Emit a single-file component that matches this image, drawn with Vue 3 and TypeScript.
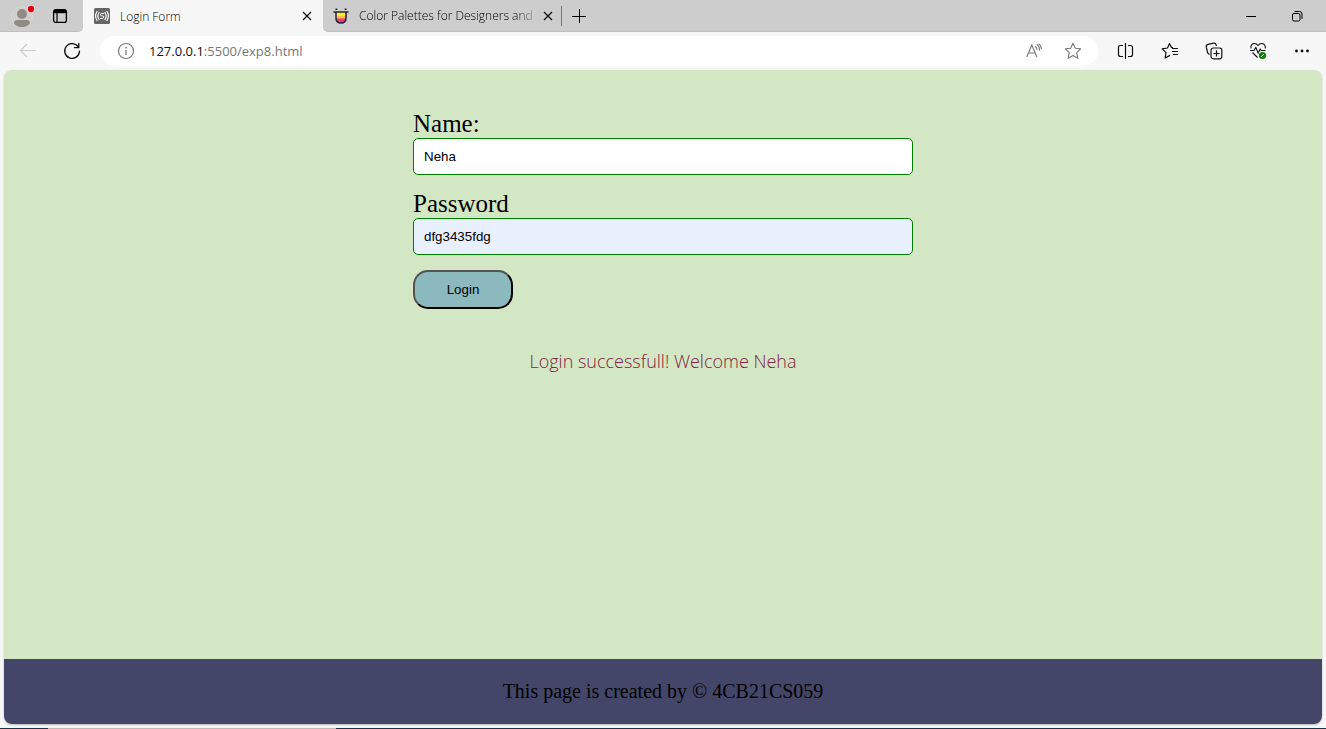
<script setup lang="ts">
import { ref } from 'vue'

const userName = ref<string>('Neha')
const password = ref<string>('dfg3435fdg')
const address = ref<string>('127.0.0.1:5500/exp8.html')
const message = ref<string>('Login successfull! Welcome Neha')

function login(): void {
  message.value = `Login successfull! Welcome ${userName.value}`
}
</script>

<template>
  <div class="browser">
    <header class="tabs">
      <div class="lead">
        <button class="icon-btn profile" aria-label="Profile">
          <svg width="28" height="28" viewBox="0 0 28 28">
            <circle cx="14" cy="15" r="10.5" fill="#d2cfcb" stroke="#dad7d2" stroke-width="1" />
            <circle cx="14" cy="12" r="5" fill="#8f8b87" />
            <path d="M6 21.5c0-2.500 1.500-3.500 3.500-3.500h9c2 0 3.500 1 3.500 3.500c-1.800 2.400-4.800 3.800-8 3.800s-6.200-1.400-8-3.800z" fill="#8f8b87" />
            <circle cx="23" cy="7" r="4" fill="#e8e6e4" />
            <circle cx="23" cy="7" r="3.200" fill="#e60012" />
          </svg>
        </button>
        <button class="icon-btn" aria-label="Tab actions">
          <svg width="16" height="16" viewBox="0 0 16 16" fill="none" stroke="#000">
            <rect x="1.600" y="1.600" width="12.800" height="12.800" rx="2.200" stroke-width="1.300" />
            <path d="M2 3.500h12" stroke-width="3.400" />
            <path d="M5 5v9" stroke-width="1.200" />
          </svg>
        </button>
      </div>
      <div class="tab active">
        <svg width="16" height="16" viewBox="0 0 16 16" fill="none" stroke="#fff" stroke-linecap="round">
          <rect width="16" height="16" rx="1.500" fill="#666" stroke="none" />
          <path d="M3 3.500Q0.200 8 3 12.500M13 3.500Q15.800 8 13 12.500M5 4.500Q2.800 8 5 11.500M11 4.500Q13.200 8 11 11.500" stroke-width="1.200" />
          <path d="M9.500 5.500H7.300Q6.500 5.500 6.500 6.600T7.500 7.800H8.500Q9.500 7.800 9.500 9T8.500 10.500H6.500" stroke-width="1" />
        </svg>
        <span class="title">Login Form</span>
        <button class="icon-btn close" aria-label="Close Login Form">
          <svg width="10" height="10" viewBox="0 0 10 10" stroke="#111" stroke-width="1.300"><path d="M1 1l8 8M9 1L1 9" /></svg>
        </button>
      </div>
      <div class="tab idle">
        <svg width="16" height="16" viewBox="0 0 16 16">
          <path d="M3 4h10v6q0 5-5 5t-5-5z" fill="#ffed24" />
          <path d="M3 8h10v3H3z" fill="#ffbd55" />
          <path d="M3.200 10.500h9.600Q12 15 8 15T3.200 10.500z" fill="#ed3c72" />
          <path d="M0.500 4h15M3 4v6q0 5 5 5t5-5V4" fill="none" stroke="#20233f" stroke-width="1.500" />
          <path d="M2.500 1.200h1.800M11.700 1.200h1.800" stroke="#20233f" stroke-width="1.400" />
        </svg>
        <span class="title">Color Palettes for Designers and</span>
        <button class="icon-btn close" aria-label="Close Color Palettes">
          <svg width="10" height="10" viewBox="0 0 10 10" stroke="#111" stroke-width="1.300"><path d="M1 1l8 8M9 1L1 9" /></svg>
        </button>
      </div>
      <button class="icon-btn new-tab" aria-label="New tab">
        <svg width="14" height="14" viewBox="0 0 14 14" stroke="#000"><path d="M0 7.500h14M7.500 0v14" /></svg>
      </button>
      <div class="window-controls">
        <button class="icon-btn" aria-label="Minimize">
          <svg width="10" height="10" viewBox="0 0 10 10" stroke="#000"><path d="M0 5.500h10" /></svg>
        </button>
        <button class="icon-btn" aria-label="Restore">
          <svg width="12" height="12" viewBox="0 0 12 12" fill="none" stroke="#000">
            <rect x="1.500" y="3.500" width="7.500" height="7.500" rx="1.500" />
            <path d="M3.500 1.500H8.500Q11 1.500 11 4V9" />
          </svg>
        </button>
      </div>
    </header>

    <nav class="toolbar">
      <button class="icon-btn nav" aria-label="Back">
        <svg width="18" height="16" viewBox="0 0 18 16" fill="none" stroke="#ccc" stroke-width="1.200"><path d="M17 7.500H1.500M8 1L1.500 7.500L8 14" /></svg>
      </button>
      <button class="icon-btn nav" aria-label="Refresh">
        <svg width="18" height="18" viewBox="0 0 18 18" fill="none" stroke="#111" stroke-width="1.300" stroke-linecap="round"><path d="M15.500 5.200A7.400 7.400 0 1 0 16.500 9.200M15.800 1.500V5.700H11.500" /></svg>
      </button>
      <div class="address">
        <button class="icon-btn" aria-label="View site information">
          <svg width="18" height="18" viewBox="0 0 18 18" fill="none" stroke="#777"><circle cx="9" cy="9" r="7.500" stroke-width="1.200" /><path d="M9 8v5" stroke-width="1.300" /><path d="M9 5v1.500" stroke-width="1.500" /></svg>
        </button>
        <a class="url" href="#" :aria-label="address"><span class="host">127.0.0.1</span>:5500/exp8.html</a>
        <button class="icon-btn page-action" aria-label="Read aloud">
          <svg width="16" height="16" viewBox="0 0 16 16" fill="none" stroke="#777" stroke-width="1.100"><path d="M0.800 14L5.800 2L10.800 14M2.500 10H9.100M9.200 3.200Q11 4.500 11 7M10.800 1.200Q13.600 3 13.600 7.500M12.600 0.600Q15.200 2.500 15.400 6" /></svg>
        </button>
        <button class="icon-btn page-action" aria-label="Add to favorites">
          <svg width="18" height="18" viewBox="0 0 18 18" fill="none" stroke="#777" stroke-width="1.100" stroke-linejoin="round"><path d="M9 1.300L11.300 6.200L16.700 6.900L12.700 10.600L13.800 16.200L9 13.500L4.200 16.200L5.300 10.600L1.300 6.900L6.700 6.200Z" /></svg>
        </button>
      </div>
      <div class="tools">
        <button class="icon-btn" aria-label="Split screen">
          <svg width="18" height="18" viewBox="0 0 18 18" fill="none" stroke="#111" stroke-width="1.200"><path d="M6 3.500H3.500Q1.500 3.500 1.500 5.500V12.500Q1.500 14.500 3.500 14.500H6M11 3.500H13.500Q15.500 3.500 15.500 5.500V12.500Q15.500 14.500 13.500 14.500H11M8.500 1V17" /></svg>
        </button>
        <button class="icon-btn" aria-label="Favorites">
          <svg width="18" height="18" viewBox="0 0 18 18" fill="none" stroke="#111" stroke-width="1.200" stroke-linejoin="round"><path d="M12 5.500L10.500 5.500L8.500 1.500L6.500 6L1.200 6.900L5 10.600L4.200 16L9 13.400M11 6.500H17M11 9.500H17M12 12.500H17" /></svg>
        </button>
        <button class="icon-btn" aria-label="Collections">
          <svg width="18" height="18" viewBox="0 0 18 18" fill="none" stroke="#111" stroke-width="1.200"><path d="M4.500 12.500Q3 12 2.600 10.500L1.300 5.200Q0.900 3 3 2.400L8.500 1.200Q10.800 0.900 11.200 3L11.400 4" /><rect x="6" y="6" width="10.800" height="10.800" rx="2.200" /><path d="M11.500 8.300V14.600M8.300 11.500H14.600" /></svg>
        </button>
        <button class="icon-btn" aria-label="Browser essentials">
          <svg width="18" height="18" viewBox="0 0 18 18" fill="none" stroke="#111" stroke-width="1.100"><path d="M2 6.500Q1.300 2 5 1.500Q7.500 1.300 9 3.500Q10.500 1.300 13 1.500Q16.700 2 16.300 6.500M1 8.500H5L6.800 5.500L9.200 11L11.200 7L12.200 8.500H16.500M3.500 10.500L8.500 15.500" /><circle cx="13.500" cy="13.500" r="3.600" fill="#107c10" stroke="none" /><path d="M12.200 14.600L14.800 12.300" stroke="#fff" stroke-width="1" /></svg>
        </button>
        <button class="icon-btn" aria-label="Settings and more">
          <svg width="16" height="16" viewBox="0 0 16 16" fill="#111"><circle cx="2.500" cy="8" r="1.400" /><circle cx="8" cy="8" r="1.400" /><circle cx="13.500" cy="8" r="1.400" /></svg>
        </button>
      </div>
    </nav>

    <div class="viewport">
      <main>
        <form @submit.prevent="login">
          <label for="name">Name:</label>
          <input id="name" v-model="userName" type="text" />
          <label for="password">Password</label>
          <input id="password" v-model="password" class="autofilled" type="text" />
          <button class="login" type="submit">Login</button>
        </form>
        <p class="message">{{ message }}</p>
      </main>
      <footer>This page is created by © 4CB21CS059</footer>
    </div>
    <div class="taskbar"></div>
  </div>
</template>

<style>
body {
  margin: 0;
}
</style>

<style scoped>
.browser {
  display: flex;
  flex-direction: column;
  height: 100vh;
  background: #f7f7f7;
  font-family: "Open Sans", "Noto Sans", sans-serif;
  overflow: hidden;
}
.icon-btn {
  display: flex;
  align-items: center;
  justify-content: center;
  flex: none;
  padding: 0;
  border: 0;
  background: none;
}
.tabs {
  display: flex;
  height: 32px;
  flex: none;
  background: #f7f7f7;
}
.lead {
  display: flex;
  align-items: center;
  gap: 16px;
  box-sizing: border-box;
  width: 83px;
  padding-left: 8px;
  background: #cdcdcd;
  border-bottom: 1px solid #c0c0c0;
  border-bottom-right-radius: 5px;
}
.tab {
  display: flex;
  align-items: center;
  box-sizing: border-box;
  width: 240px;
  padding: 0 11px 0 11px;
  font-size: 12px;
  font-weight: 300;
  gap: 10px;
}
.tab.idle {
  width: 238px;
  padding: 0 10px;
  background: #cdcdcd;
  border-bottom: 1px solid #c0c0c0;
  border-bottom-left-radius: 5px;
}
.tab svg {
  flex: none;
}
.title {
  flex: 1;
  white-space: nowrap;
  color: #000;
}
.idle .title {
  mask-image: linear-gradient(to right, #000 90%, rgba(0, 0, 0, 0.3));
}
.new-tab {
  position: relative;
  width: 36px;
  background: #cdcdcd;
  border-bottom: 1px solid #c0c0c0;
}
.new-tab::before {
  content: "";
  position: absolute;
  left: 0;
  top: 6px;
  width: 1px;
  height: 20px;
  background: #777;
}
.window-controls {
  display: flex;
  flex: 1;
  justify-content: flex-end;
  background: #cdcdcd;
  border-bottom: 1px solid #c0c0c0;
  padding-right: 6px;
}
.window-controls .icon-btn {
  width: 46px;
}
.toolbar {
  display: flex;
  align-items: center;
  flex: none;
  height: 38px;
  padding: 0 2px 0 6px;
}
.nav {
  width: 44px;
}
.address {
  display: flex;
  align-items: center;
  flex: 1;
  height: 30px;
  margin-left: 6px;
  padding: 0 16px 0 17px;
  border-radius: 15px;
  background: #fff;
}
.url {
  flex: 1;
  margin-left: 14px;
  font-size: 13px;
  color: #777;
  text-decoration: none;
}
.host {
  color: #111;
}
.page-action {
  margin-left: 22px;
}
.tools {
  display: flex;
  margin-left: 6px;
}
.tools .icon-btn {
  width: 44px;
}
.viewport {
  display: flex;
  flex-direction: column;
  flex: 1;
  margin: 0 4px 4px;
  border-radius: 8px;
  overflow: hidden;
  box-shadow: 0 1px 2px rgba(0, 0, 0, 0.25);
  font-family: "Liberation Serif", "Times New Roman", serif;
}
main {
  flex: 1;
  padding-top: 40px;
  background: #d4e7c5;
}
form {
  display: flex;
  flex-direction: column;
  width: 500px;
  max-width: 100%;
  margin: 0 auto;
}
label {
  font-size: 25px;
  line-height: 28px;
}
input {
  box-sizing: border-box;
  height: 37px;
  margin: 0 0 15px;
  padding: 10px;
  border: 1px solid green;
  border-radius: 5px;
  background: #fff;
  color: #000;
  font-family: "Liberation Sans", Arial, sans-serif;
}
.autofilled {
  background: #e8f0fe;
}
.login {
  width: 100px;
  height: 39px;
  border: 2px outset #000;
  border-radius: 15px;
  background: #8cb9bd;
  color: #000;
  font-family: "Liberation Sans", Arial, sans-serif;
}
.message {
  margin: 40px 0 0;
  text-align: center;
  color: #7e2343;
  font-family: "Open Sans", "Noto Sans", sans-serif;
  font-size: 18px;
  font-weight: 300;
  line-height: 24px;
}
footer {
  padding: 20px 0 21px;
  line-height: 24px;
  background: #434668;
  color: #000;
  text-align: center;
  font-size: 20px;
}
.taskbar {
  flex: none;
  height: 1px;
  background: linear-gradient(to right, #17324d 48px, #bbb 48px 336px, #17324d 336px);
}
</style>
